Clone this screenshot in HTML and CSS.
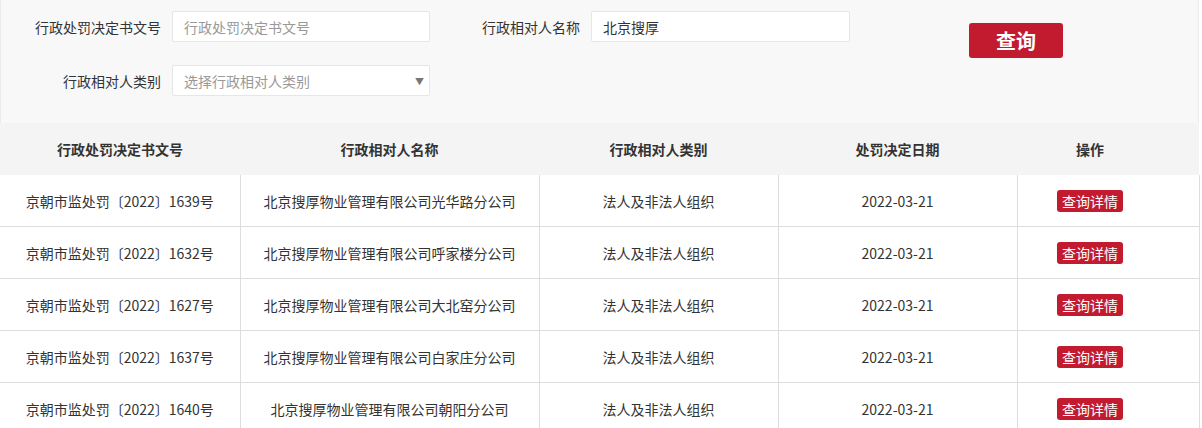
FILE: index.html
```html
<!DOCTYPE html>
<html lang="zh-CN">
<head>
<meta charset="utf-8">
<title>行政处罚查询</title>
<link rel="stylesheet" href="styles.css">
</head>
<body>
<div class="wrap">
  <form class="search">
    <label class="lbl">行政处罚决定书文号</label>
    <div class="field"><span class="ph">行政处罚决定书文号</span></div>
    <label class="lbl lbl2">行政相对人名称</label>
    <div class="field"><span class="val">北京搜厚</span></div>
    <div class="spacer"></div>
    <button type="button" class="btn">查询</button>
    <label class="lbl r2">行政相对人类别</label>
    <div class="field select r2"><span class="ph">选择行政相对人类别</span><span class="arrow">▼</span></div>
  </form>
  <table class="list">
    <thead>
      <tr><th class="c1">行政处罚决定书文号</th><th class="c2">行政相对人名称</th><th class="c3">行政相对人类别</th><th class="c4">处罚决定日期</th><th class="c5">操作</th></tr>
    </thead>
    <tbody>
      <tr><td>京朝市监处罚〔2022〕1639号</td><td>北京搜厚物业管理有限公司光华路分公司</td><td>法人及非法人组织</td><td>2022-03-21</td><td><span class="tag">查询详情</span></td></tr>
      <tr><td>京朝市监处罚〔2022〕1632号</td><td>北京搜厚物业管理有限公司呼家楼分公司</td><td>法人及非法人组织</td><td>2022-03-21</td><td><span class="tag">查询详情</span></td></tr>
      <tr><td>京朝市监处罚〔2022〕1627号</td><td>北京搜厚物业管理有限公司大北窑分公司</td><td>法人及非法人组织</td><td>2022-03-21</td><td><span class="tag">查询详情</span></td></tr>
      <tr><td>京朝市监处罚〔2022〕1637号</td><td>北京搜厚物业管理有限公司白家庄分公司</td><td>法人及非法人组织</td><td>2022-03-21</td><td><span class="tag">查询详情</span></td></tr>
      <tr><td>京朝市监处罚〔2022〕1640号</td><td>北京搜厚物业管理有限公司朝阳分公司</td><td>法人及非法人组织</td><td>2022-03-21</td><td><span class="tag">查询详情</span></td></tr>
    </tbody>
  </table>
</div>
</body>
</html>
```
FILE: styles.css
```css
html, body { margin: 0; padding: 0; background: #fff; }
body { font-family: "Noto Sans CJK SC", "Liberation Sans", sans-serif; font-size: 14px; color: #333; }
.wrap { width: 1199px; }
.search {
  display: grid;
  grid-template-columns: 171px 258px 161px 259px 119px 94px;
  grid-template-rows: 31px 31px;
  row-gap: 23px;
  padding: 11px 0 27px;
  background: #f8f8f8;
  border-left: 1px solid #ebebeb;
  border-right: 1px solid #ebebeb;
  box-sizing: border-box;
  height: 123px;
}
.lbl { display: flex; align-items: center; justify-content: flex-end; padding-right: 11px; font-size: 14px; color: #333; }
.lbl2 { padding-right: 11px; }
.field {
  display: flex; align-items: center; position: relative;
  background: #fff; border: 1px solid #e6e6e6; border-radius: 2px;
  padding-left: 11px; box-sizing: border-box;
}
.ph { color: #999; }
.val { color: #333; }
.r2 { grid-row: 2; }
.lbl.r2 { grid-column: 1; }
.field.r2 { grid-column: 2; }
.arrow { position: absolute; right: 5px; top: 9px; font-size: 9px; color: #777; }
.btn {
  grid-column: 6; grid-row: 1 / span 2; align-self: start; margin-top: 12px;
  width: 94px; height: 35px; border: 0; border-radius: 3px;
  background: #c21a2e; color: #fff; font-family: inherit; font-size: 20px; font-weight: bold; padding: 0;
}
.list { border-collapse: collapse; table-layout: fixed; width: 1199px; }
.list th { height: 52px; background: #f4f4f4; font-weight: bold; font-size: 14px; color: #333; padding: 0; }
.c1 { width: 240px; }
.c2 { width: 299px; }
.c3 { width: 239px; }
.c4 { width: 239px; }
.list th.c5 { width: 146px; padding-right: 36px; }
.list td {
  height: 51px; padding: 0; text-align: center; color: #333;
  border-bottom: 1px solid #ddd; border-left: 1px solid #ddd;
}
.list td:first-child { border-left: 0; }
.list td:last-child { border-right: 1px solid #ddd; padding-right: 36px; }
.tag {
  display: inline-block; height: 22px; line-height: 22px; padding: 0 5px;
  background: #c21a2e; color: #fff; border-radius: 3px; font-size: 14px;
}
```
